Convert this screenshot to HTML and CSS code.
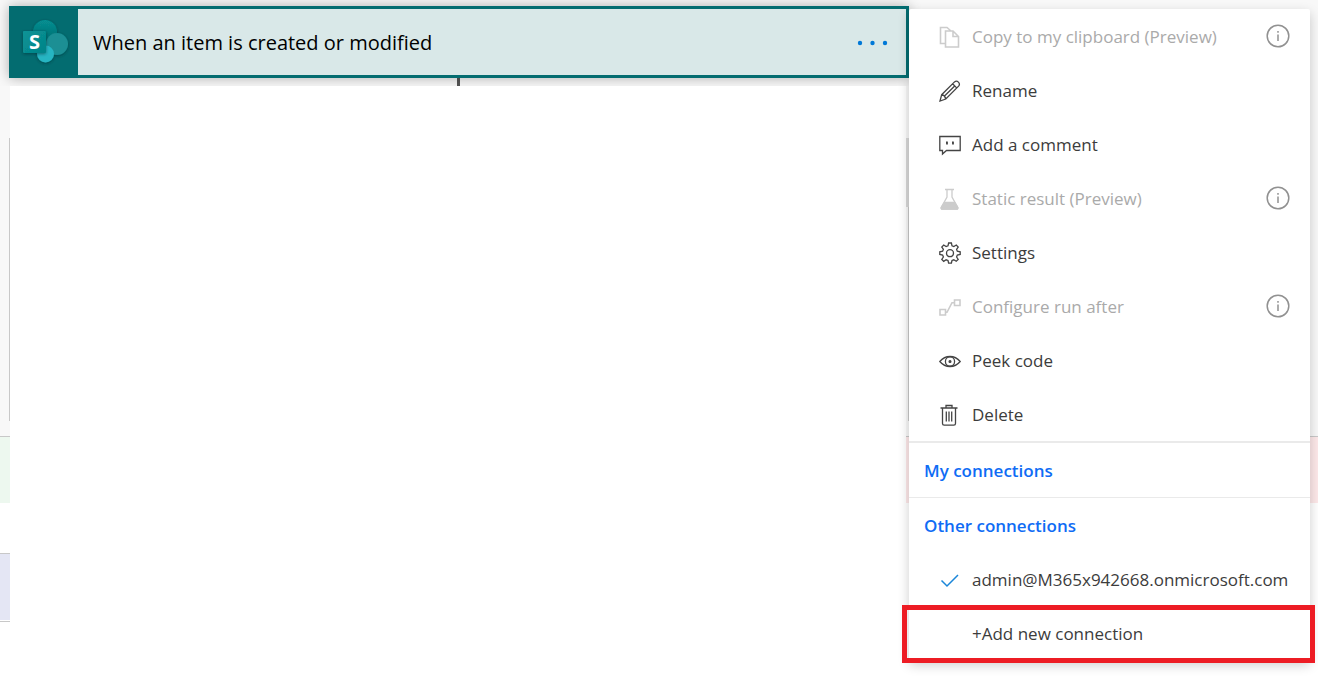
FILE: index.html
```html
<!DOCTYPE html>
<html lang="en">
<head>
<meta charset="utf-8">
<meta name="viewport" content="width=device-width, initial-scale=1">
<title>Flow designer</title>
<link rel="stylesheet" href="styles.css">
</head>
<body>
<div class="designer">
  <div class="canvas" aria-hidden="true">
    <div class="edge edge-left">
      <div class="space"></div>
      <div class="band band-green"></div>
      <div class="gap"></div>
      <div class="band band-blue"></div>
      <div class="end-line"></div>
    </div>
    <div class="blank"><span class="connector"></span></div>
    <div class="edge edge-right">
      <div class="space"></div>
      <div class="band band-red"></div>
      <div class="gap"></div>
    </div>
    <span class="scroll-thumb"></span>
  </div>

  <main class="card">
    <div class="card-icon">
      <svg width="50" height="50" viewBox="0 0 50 50" aria-hidden="true">
        <defs>
          <linearGradient id="tile" x1="0" y1="0" x2="1" y2="1"><stop offset="0" stop-color="#0a9497"/><stop offset="1" stop-color="#038387"/></linearGradient>
          <linearGradient id="ball" x1="0" y1="0" x2="0" y2="1"><stop offset="0" stop-color="#078f92"/><stop offset="1" stop-color="#03696c"/></linearGradient>
          <filter id="soft" x="-30%" y="-30%" width="160%" height="160%"><feDropShadow dx="0" dy="1" stdDeviation="1.5" flood-color="#002c2e" flood-opacity=".55"/></filter>
        </defs>
        <g filter="url(#soft)">
          <circle cx="25" cy="15" r="12" fill="url(#ball)"/>
          <circle cx="37" cy="27" r="11" fill="#1a8f94"/>
          <circle cx="25.500" cy="37" r="8.500" fill="#28b5c2"/>
        </g>
        <rect x="3" y="14" width="23" height="22" rx="1" fill="url(#tile)" filter="url(#soft)"/>
        <text class="logo-letter" x="14.500" y="32" text-anchor="middle">S</text>
      </svg>
    </div>
    <h1 class="card-title">When an item is created or modified</h1>
    <button class="more" type="button" aria-label="More commands">
      <svg width="32" height="6" viewBox="0 0 32 6" aria-hidden="true"><circle cx="3" cy="3" r="2.200"/><circle cx="15.500" cy="3" r="2.200"/><circle cx="28" cy="3" r="2.200"/></svg>
    </button>
  </main>

  <nav class="menu" aria-label="Commands">
    <div class="group">
      <button class="item" type="button" disabled>
        <svg class="icon" viewBox="0 0 22 22"><path class="mid" d="M6.500 17.500H1.500V1.500H8l4 3.500M6.500 5H14l5.500 5.500v10.500h-13zM14 5v5.500h5.500"/></svg>
        <span class="label">Copy to my clipboard (Preview)</span>
        <svg class="info" viewBox="0 0 24 24"><circle cx="12" cy="12" r="10.800"/><path d="M12 7v1.800M12 10.500v6.500"/></svg>
      </button>
      <button class="item" type="button">
        <svg class="icon" viewBox="0 0 22 22"><path d="M1 21l1.700-6.300L15.500 1.900q2-1.600 3.900.2 1.900 2 .2 4L6.800 19zM2.700 14.700q3.300.7 4.100 4.300M13.600 3.800l4.300 4.300M15.700 6L5 16.500"/></svg>
        <span class="label">Rename</span>
      </button>
      <button class="item" type="button">
        <svg class="icon" viewBox="0 0 22 22"><path d="M.8 2.500h20.400v14H7.500L3.500 20v-3.500H.8z"/><path class="thick" d="M8 8v2.500M14 8v2.500M7 8.500h1.800M13 8.500h1.800"/></svg>
        <span class="label">Add a comment</span>
      </button>
      <button class="item" type="button" disabled>
        <svg class="icon" viewBox="0 0 22 22"><path d="M6 1.500h9M8 1.500V9L2.200 19.500q-.3 1.700 1.300 1.700h14q1.600 0 1.300-1.700L13 9V1.500"/><path class="solid" d="M5.500 14.500h10.200l3.100 5q.3 1.700-1.300 1.700h-14q-1.600 0-1.300-1.700z"/></svg>
        <span class="label">Static result (Preview)</span>
        <svg class="info" viewBox="0 0 24 24"><circle cx="12" cy="12" r="10.800"/><path d="M12 7v1.800M12 10.500v6.500"/></svg>
      </button>
      <button class="item" type="button">
        <svg class="icon" viewBox="0 0 22 22"><path d="M9.600 1h2.800l.6 2.800 1.800.8 2.500-1.600 1.900 2-1.600 2.400.7 1.800 2.900.6v2.700l-2.900.6-.7 1.900 1.600 2.400-2 1.900-2.400-1.500-1.800.7-.6 2.700H9.600L9 18.500l-1.900-.7-2.400 1.500-1.900-1.900L4.400 15l-.8-1.900-2.800-.6V9.800l2.800-.6.8-1.800L2.800 5l1.900-2 2.400 1.600L9 3.800z"/><circle cx="11" cy="11.200" r="3.500"/></svg>
        <span class="label">Settings</span>
      </button>
      <button class="item" type="button" disabled>
        <svg class="icon" viewBox="0 0 22 22"><path class="mid" d="M1 13.500h5.500V19H1zM15.500 4H21v5.500h-5.500zM6.500 16.300H8L13 6.700h2.500"/></svg>
        <span class="label">Configure run after</span>
        <svg class="info" viewBox="0 0 24 24"><circle cx="12" cy="12" r="10.800"/><path d="M12 7v1.800M12 10.500v6.500"/></svg>
      </button>
      <button class="item" type="button">
        <svg class="icon" viewBox="0 0 22 22"><path d="M.8 11.500Q5 6.500 11 6.500t10.200 5Q17 16.500 11 16.500T.8 11.500z"/><circle cx="11" cy="11.500" r="4.600"/><circle class="solid" cx="11" cy="11.500" r=".9"/></svg>
        <span class="label">Peek code</span>
      </button>
      <button class="item" type="button">
        <svg class="icon" viewBox="0 0 22 22"><path d="M1.500 4h17M7 4V1.500h6V4M3.500 4v15.500q0 1.700 1.700 1.700h9.600q1.700 0 1.700-1.700V4M7.300 7.500v10M10 7.500v10M12.700 7.500v10"/></svg>
        <span class="label">Delete</span>
      </button>
    </div>
    <section class="group connections">
      <h2 class="heading">My connections</h2>
    </section>
    <section class="group others">
      <h2 class="heading">Other connections</h2>
      <button class="item" type="button">
        <svg class="icon check" viewBox="0 0 22 22"><path d="M2.500 11.500l5.500 5.500L19 6"/></svg>
        <span class="label">admin@M365x942668.onmicrosoft.com</span>
      </button>
      <div class="highlighted">
        <button class="item" type="button">
          <span class="icon"></span>
          <span class="label">+Add new connection</span>
        </button>
      </div>
    </section>
  </nav>
</div>
</body>
</html>
```
FILE: styles.css
```css
* { box-sizing: border-box; }

body {
  margin: 0;
  background: #fff;
  color: #3c3c3c;
  font-family: "Segoe UI", "Open Sans", "Noto Sans", sans-serif;
  font-size: 17px;
}

button {
  border: 0;
  background: none;
  color: inherit;
  font: inherit;
  cursor: pointer;
}

.designer {
  position: relative;
  display: flex;
  align-items: flex-start;
  min-height: 100vh;
  padding: 6px 8px 0 9px;
  overflow: hidden;
}

/* Workflow surface behind the card and its menu */
.canvas {
  position: absolute;
  inset: 0;
  display: grid;
  grid-template-columns: 10px 1fr 412px;
}
.edge { display: flex; flex-direction: column; }
.space { height: 436px; background: #f8f8f8; }
.edge-left .space {
  background: linear-gradient(#c8c8c8, #c8c8c8) 9px 138px / 1px 283px no-repeat #f8f8f8;
}
.edge-right .space {
  background: linear-gradient(#c8c8c8, #c8c8c8) 2px 138px / 1px 283px no-repeat #f8f8f8;
}
.band { height: 67px; border-top: 1px solid #c8c8c8; }
.band-green { background: #edf8ef; }
.band-blue { background: #e4e6f4; }
.band-red { background: #fde8e9; }
.gap { height: 50px; }
.end-line { height: 2px; border-bottom: 1px solid #c8c8c8; }
.blank { height: 86px; padding-top: 40px; background: #f8f8f8; }
.connector {
  display: block;
  width: 3px;
  height: 100%;
  margin: 0 auto;
  background: #555;
}
.scroll-thumb {
  position: absolute;
  top: 138px;
  right: 409px;
  width: 3px;
  height: 69px;
  background: #d8d8d8;
}

.card {
  position: relative;
  display: flex;
  flex: 1;
  align-items: stretch;
  min-width: 0;
  height: 72px;
  border: 3px solid #036c70;
  background: #d9e8e8;
  box-shadow: 0 0 12px rgba(0, 0, 0, .3);
  /* The shadow stays inside the strip above the blank area */
  clip-path: inset(-12px -12px -8px -12px);
}
.card-icon {
  display: flex;
  align-items: center;
  width: 66px;
  padding-left: 8px;
  background: #036c70;
}
.logo-letter { fill: #fff; font: 700 20px "Open Sans", sans-serif; }
.card-title {
  flex: 1;
  align-self: center;
  margin: 0;
  padding: 2px 0 0 15px;
  color: #000;
  font-size: 20px;
  font-weight: 400;
  line-height: 28px;
}
.more { width: 66px; padding: 0; }
.more svg { display: block; margin: 2px auto 0; fill: #0078d7; }

.menu {
  position: relative;
  width: 401px;
  margin-top: 3px;
  border-radius: 2px;
  background: #fff;
  box-shadow: 0 4px 12px rgba(0, 0, 0, .2);
}
.item {
  display: flex;
  align-items: center;
  width: 100%;
  height: 54px;
  padding: 0 20px 0 30px;
  text-align: left;
}
.item:disabled { color: #aaa; cursor: default; }
.icon {
  flex: none;
  width: 22px;
  height: 22px;
  margin: 2px 11px 0 0;
  fill: none;
  stroke: #444;
  stroke-width: 1.3;
}
.item:disabled .icon { stroke: #ccc; }
.icon .solid { fill: #444; }
.item:disabled .solid { fill: #ccc; }
.icon .thick { stroke-width: 1.8; }
.icon .mid { stroke-width: 1.6; }
.check { stroke: #1a86d9; stroke-width: 1.5; }
.label { flex: 1; white-space: nowrap; }
.info {
  width: 24px;
  height: 24px;
  fill: none;
  stroke: #919191;
  stroke-width: 1.5;
}
.connections { border-top: 2px solid #eaeaea; }
.others { border-top: 1px solid #eaeaea; padding-bottom: 1px; }
.heading {
  margin: 0;
  padding: 2px 0 0 15px;
  color: #0f6cf5;
  font-size: 17px;
  font-weight: 600;
  line-height: 52px;
}
.highlighted { position: relative; }
.highlighted::after {
  content: "";
  position: absolute;
  inset: -1px -5px -3px -7px;
  border: 5px solid #ed1c24;
  pointer-events: none;
}
```
